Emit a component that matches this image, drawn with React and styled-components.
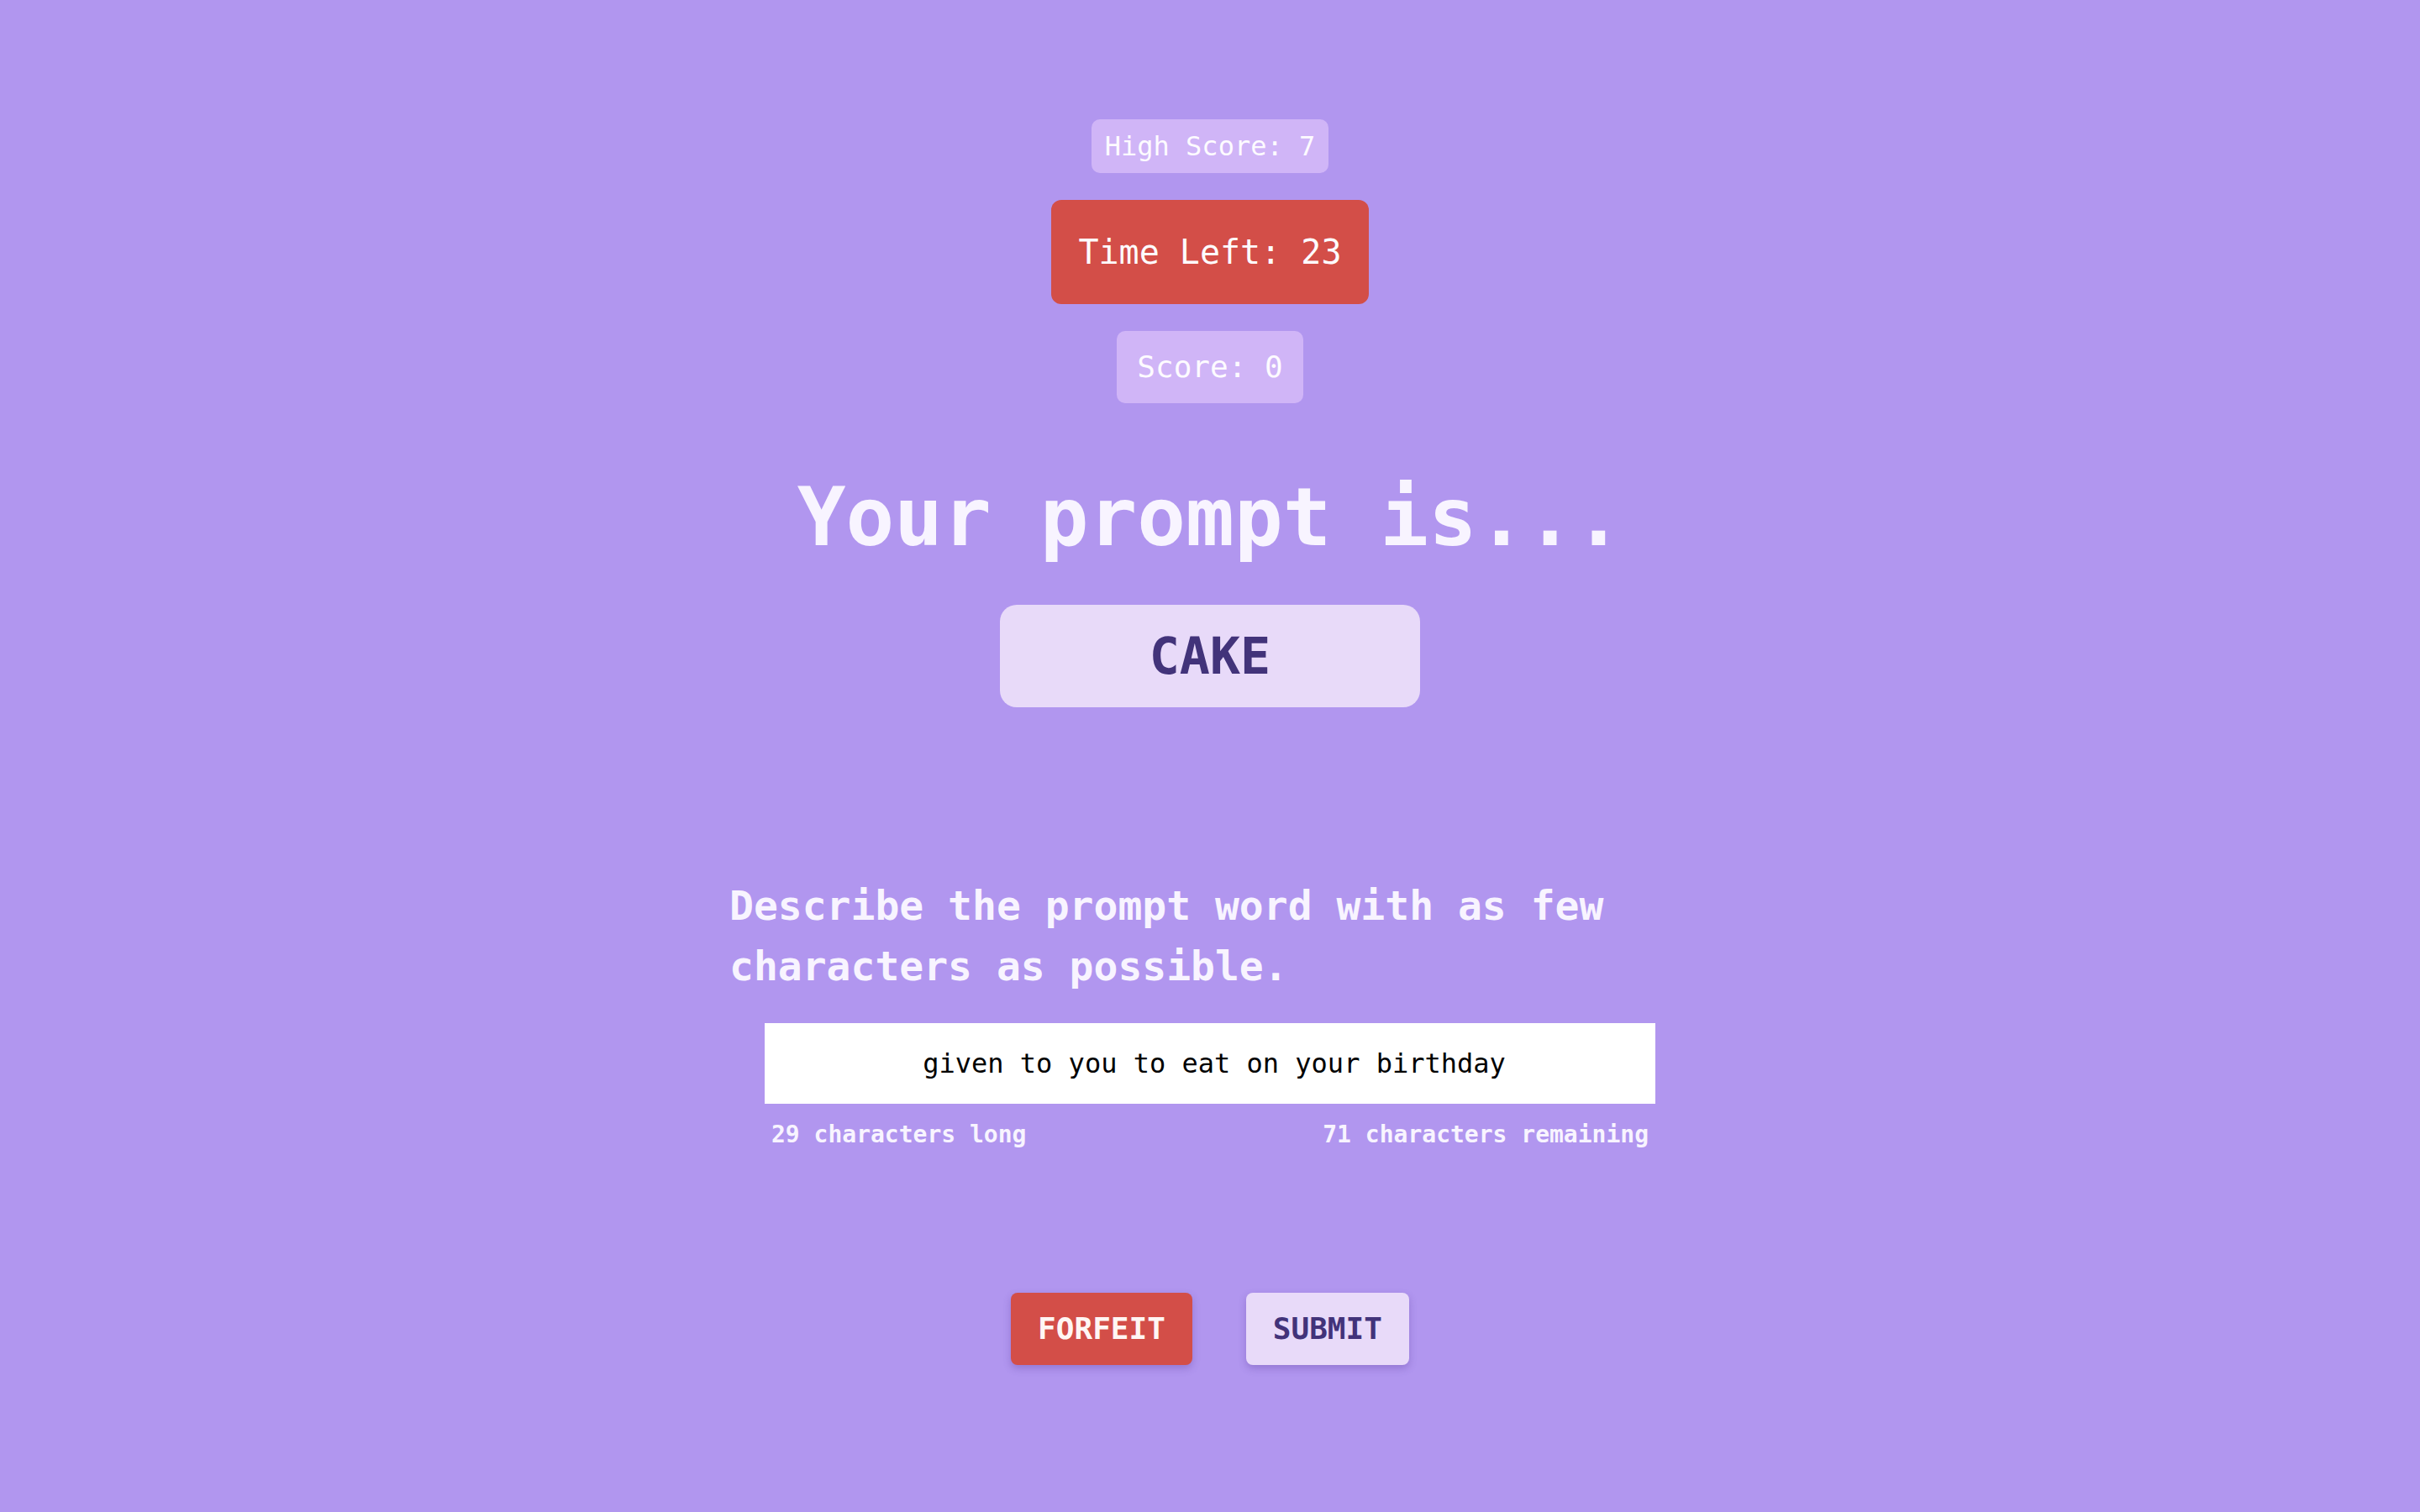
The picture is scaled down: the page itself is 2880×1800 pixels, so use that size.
import React, { useState } from "react"
import styled, { createGlobalStyle } from "styled-components"

const GlobalStyle = createGlobalStyle`
  html, body {
    margin: 0;
    padding: 0;
    background-color: #b196ef;
  }
  body {
    font-family: "DejaVu Sans Mono", "Liberation Mono", monospace;
    color: #f8f4ff;
  }
`

const Page = styled.main`
  min-height: 100vh;
  display: flex;
  flex-direction: column;
  align-items: center;
  padding-top: 142px;
  box-sizing: border-box;
`

const Stats = styled.div`
  display: flex;
  flex-direction: column;
  align-items: center;
  gap: 32px;
`

const Badge = styled.div`
  background-color: ${p => (p.$alert ? "#d34e48" : "#d0b5f7")};
  color: #fdfbff;
  font-size: ${p => p.$size}px;
  line-height: 1.5;
  padding: ${p => p.$pad};
  border-radius: ${p => (p.$alert ? 12 : 10)}px;
`

const Heading = styled.h1`
  margin: 64px 0 0;
  font-size: 96px;
  line-height: 1.5;
  font-weight: 700;
  color: #f8f4ff;
`

const PromptWord = styled.div`
  margin-top: 32px;
  width: 500px;
  box-sizing: border-box;
  padding: 16px 0;
  text-align: center;
  background-color: #e8daf9;
  color: #42337a;
  font-size: 60px;
  font-weight: 700;
  line-height: 1.5;
  border-radius: 20px;
`

const Form = styled.section`
  margin-top: 200px;
  width: 1144px;
  display: flex;
  flex-direction: column;
  align-items: center;
`

const Instructions = styled.p`
  margin: 0;
  align-self: stretch;
  font-size: 48px;
  font-weight: 700;
  line-height: 1.5;
`

const InputWrap = styled.div`
  margin-top: 32px;
  width: 1060px;
`

const Answer = styled.input`
  display: block;
  width: 100%;
  height: 96px;
  box-sizing: border-box;
  padding: 0 0 0 10px;
  border: none;
  outline: none;
  background: #ffffff;
  color: #000;
  text-align: center;
  font-family: "DejaVu Sans Mono", "Liberation Mono", monospace;
  font-size: 32px;
`

const Counts = styled.div`
  display: flex;
  justify-content: space-between;
  padding: 16px 8px 0;
  font-size: 28px;
  font-weight: 700;
  line-height: 1.5;
`

const Actions = styled.div`
  margin-top: 167px;
  display: flex;
  gap: 64px;
`

const Button = styled.button`
  font-family: "DejaVu Sans Mono", "Liberation Mono", monospace;
  font-size: 36px;
  font-weight: 700;
  line-height: 1.5;
  padding: 16px 32px;
  border: none;
  border-radius: 8px;
  cursor: pointer;
  background-color: ${p => (p.$danger ? "#d34e48" : "#e8daf9")};
  color: ${p => (p.$danger ? "#fff6f4" : "#42337a")};
  box-shadow: 0 4px 10px rgba(80, 50, 150, 0.3);
`

const MAX = 100

export default function App() {
  const [text, setText] = useState("given to you to eat on your birthday")
  const len = text.replace(/\s/g, "").length

  return (
    <>
      <GlobalStyle />
      <Page>
        <Stats>
          <Badge $size={32} $pad="8px 16px">High Score: 7</Badge>
          <Badge $alert $size={40} $pad="32px 32px">Time Left: 23</Badge>
          <Badge $size={36} $pad="16px 24px">Score: 0</Badge>
        </Stats>
        <Heading>Your prompt is...</Heading>
        <PromptWord>CAKE</PromptWord>
        <Form>
          <Instructions>
            Describe the prompt word with as few characters as possible.
          </Instructions>
          <InputWrap>
            <Answer value={text} onChange={e => setText(e.target.value)} />
            <Counts>
              <span>{len} characters long</span>
              <span>{MAX - len} characters remaining</span>
            </Counts>
          </InputWrap>
        </Form>
        <Actions>
          <Button $danger>FORFEIT</Button>
          <Button>SUBMIT</Button>
        </Actions>
      </Page>
    </>
  )
}
